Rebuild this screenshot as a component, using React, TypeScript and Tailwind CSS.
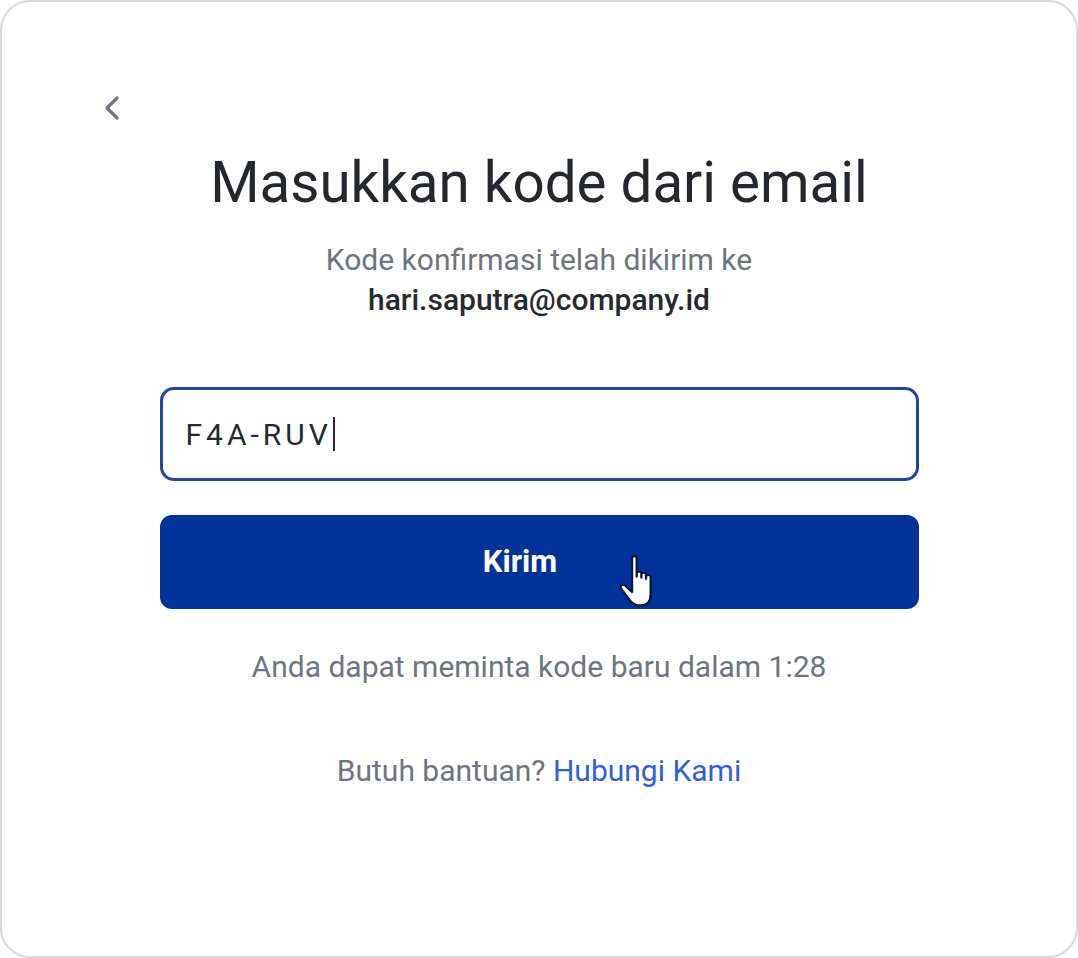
import React from "react";

export default function App() {
  return (
    <div
      className="w-[1078px] h-[958px] bg-white"
      style={{ fontFamily: "Roboto, 'Noto Sans', sans-serif" }}
    >
      <div className="relative w-full h-full rounded-[30px] border-2 border-[#d9d9d9] bg-white flex flex-col items-center">
        <button className="absolute left-[96px] top-[90px] w-[28px] h-[32px] flex items-center justify-center">
          <svg width="16" height="26" viewBox="0 0 16 26" fill="none">
            <path d="M13 3 L3 13 L13 23" stroke="#6b7280" strokeWidth="3.2" strokeLinecap="round" strokeLinejoin="round" />
          </svg>
        </button>

        <h1 className="mt-[145px] text-[56.5px] leading-[72px] font-normal text-[#24282e]">
          Masukkan kode dari email
        </h1>
        <p className="mt-[21px] text-[30px] leading-[40px] text-[#6e7480]">
          Kode konfirmasi telah dikirim ke
        </p>
        <p className="text-[30px] leading-[40px] font-medium text-[#262a30]">
          hari.saputra@company.id
        </p>

        <div className="mt-[67px] w-[759px] h-[94px] rounded-[14px] border-[3px] border-[#1f45a8] flex items-center px-[23px]">
          <span className="text-[30px] tracking-[4px] text-[#262a30]">F4A-RUV</span>
          <span className="w-[2px] h-[34px] bg-[#262a30] ml-[1px]" />
        </div>

        <div className="relative mt-[34px] w-[759px] h-[94px] rounded-[12px] bg-[#003399] flex items-center justify-center pr-[38px]">
          <span className="text-[31px] font-bold text-white">Kirim</span>
          <svg
            className="absolute left-[459px] top-[40px]"
            width="34"
            height="52"
            viewBox="0.4 1.2 14.6 23.6"
            preserveAspectRatio="none"
          >
            <path
              d="M6 2.5 C6 1.5 8 1.5 8 2.5 L8 11 L8 9.5 C8 8.5 10 8.5 10 9.5 L10 11.5 L10 10 C10 9 12 9 12 10 L12 12 L12 11 C12 10 14 10 14 11 L14 19 C14 22 12.5 24 10 24 L8.5 24 C6.5 24 5.5 22.5 4.5 21 L1.3 16.5 C0.6 15.5 2 14 3 15 L6 18 Z"
              fill="white"
              stroke="#0b1a3a"
              strokeWidth="1"
              strokeLinejoin="round"
            />
          </svg>
        </div>

        <p className="mt-[38px] text-[30px] leading-[40px] text-[#6e7480]">
          Anda dapat meminta kode baru dalam 1:28
        </p>

        <p className="mt-[64px] text-[30px] leading-[40px] text-[#6e7480]">
          Butuh bantuan? <span className="text-[#2f5fe0]">Hubungi Kami</span>
        </p>
      </div>
    </div>
  );
}
